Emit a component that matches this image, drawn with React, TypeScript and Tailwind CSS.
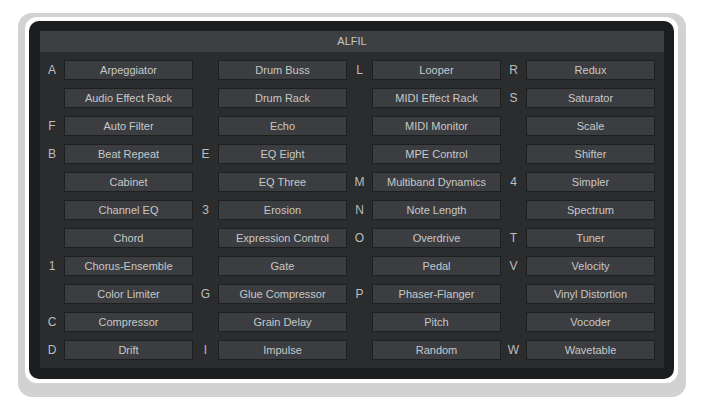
import React from "react";

type Cell = [string, string];

const rows: Cell[][] = [
  [["A", "Arpeggiator"], ["", "Drum Buss"], ["L", "Looper"], ["R", "Redux"]],
  [["", "Audio Effect Rack"], ["", "Drum Rack"], ["", "MIDI Effect Rack"], ["S", "Saturator"]],
  [["F", "Auto Filter"], ["", "Echo"], ["", "MIDI Monitor"], ["", "Scale"]],
  [["B", "Beat Repeat"], ["E", "EQ Eight"], ["", "MPE Control"], ["", "Shifter"]],
  [["", "Cabinet"], ["", "EQ Three"], ["M", "Multiband Dynamics"], ["4", "Simpler"]],
  [["", "Channel EQ"], ["3", "Erosion"], ["N", "Note Length"], ["", "Spectrum"]],
  [["", "Chord"], ["", "Expression Control"], ["O", "Overdrive"], ["T", "Tuner"]],
  [["1", "Chorus-Ensemble"], ["", "Gate"], ["", "Pedal"], ["V", "Velocity"]],
  [["", "Color Limiter"], ["G", "Glue Compressor"], ["P", "Phaser-Flanger"], ["", "Vinyl Distortion"]],
  [["C", "Compressor"], ["", "Grain Delay"], ["", "Pitch"], ["", "Vocoder"]],
  [["D", "Drift"], ["I", "Impulse"], ["", "Random"], ["W", "Wavetable"]],
];

export default function App() {
  return (
    <div
      className="w-[704px] h-[417px] bg-white pl-[18px] pt-[13px]"
      style={{ fontFamily: '"Liberation Sans", Arial, sans-serif' }}
    >
      <div className="w-[668px] rounded-[14px] bg-[#d2d2d2] pl-[7px] pr-[8px] pt-[4px] pb-[14px]">
        <div className="rounded-[12px] bg-white p-[4px]">
          <div className="rounded-[10px] bg-[#1c1d1f] pl-[11px] pr-[10px] pt-[10px] pb-[11px]">
            <div className="bg-[#2a2c2e] pb-[8px]">
              <div className="h-[21px] bg-[#3d3f41] flex items-center justify-center text-[11px] text-[#c4c4c4]">
                ALFIL
              </div>
              <div className="grid grid-cols-[24px_129px_25px_129px_25px_129px_25px_129px] gap-y-[8px] pt-[8px]">
                {rows.map((row, ri) =>
                  row.map(([letter, name], ci) => (
                    <React.Fragment key={`${ri}-${ci}`}>
                      <div className="h-[20px] flex items-center justify-center text-[12px] text-[#bdbdbd]">
                        {letter}
                      </div>
                      <div className="h-[20px] flex items-center justify-center border border-[#1e1f21] bg-[#3b3d40] text-[11px] text-[#c8c8c8] whitespace-nowrap">
                        {name}
                      </div>
                    </React.Fragment>
                  ))
                )}
              </div>
            </div>
          </div>
        </div>
      </div>
    </div>
  );
}
